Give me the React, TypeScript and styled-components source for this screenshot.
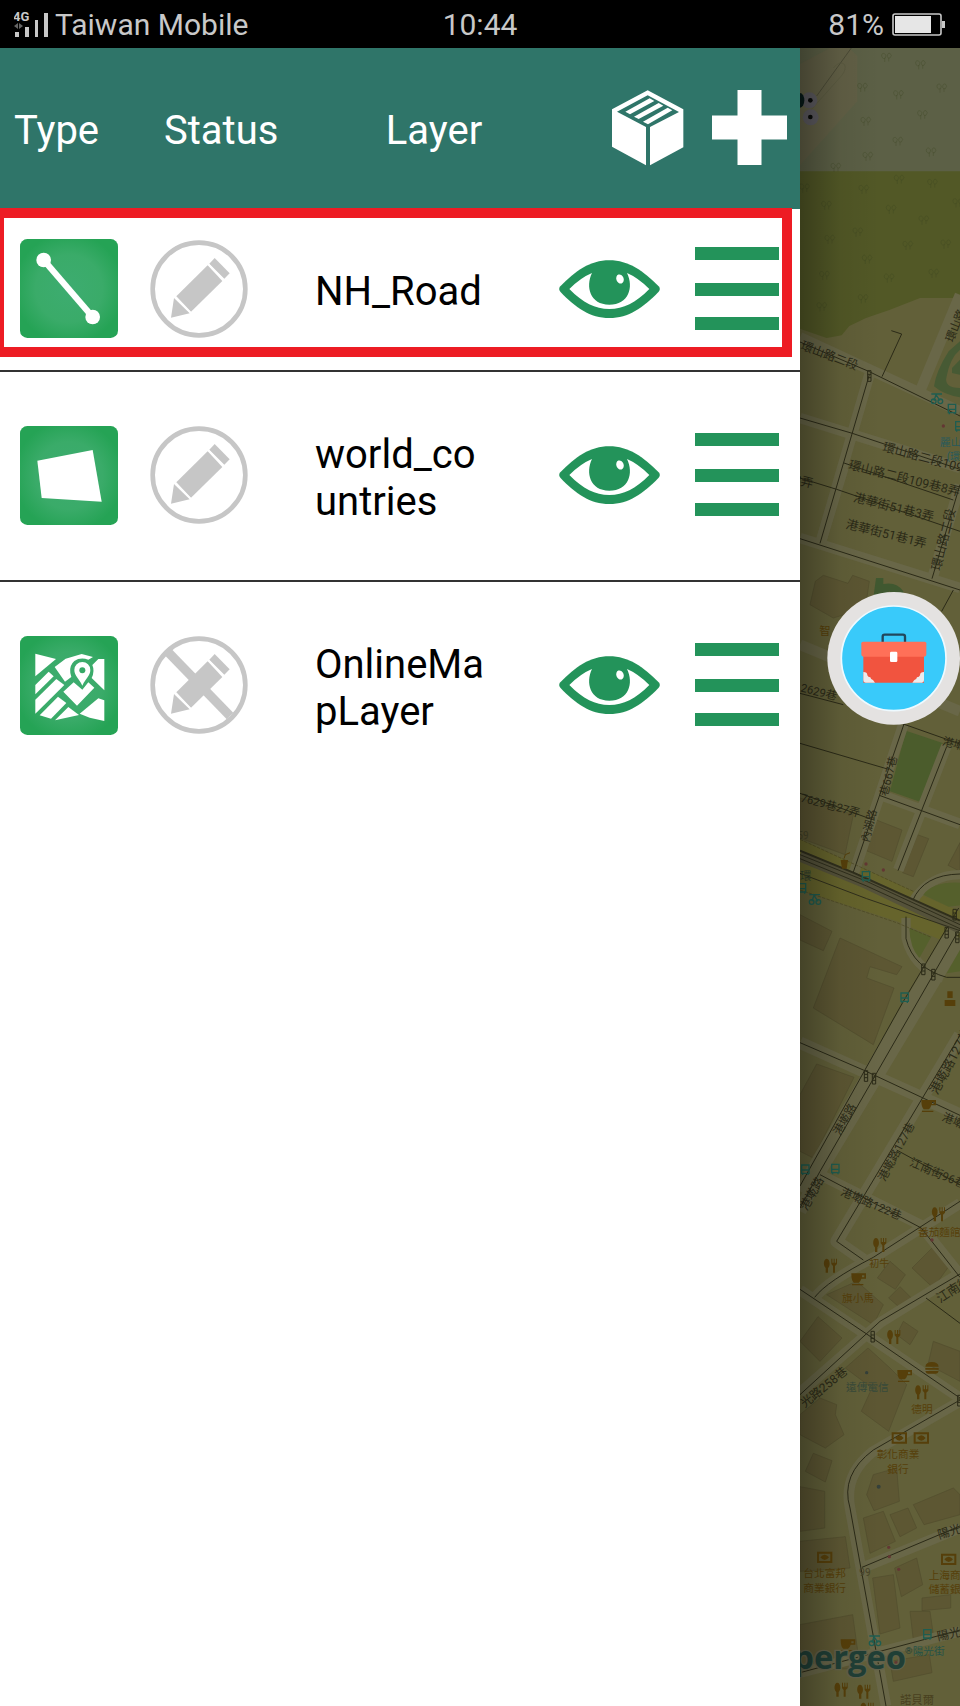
import React from "react";
import styled, { createGlobalStyle } from "styled-components";

const GlobalStyle = createGlobalStyle`
  * { box-sizing: border-box; }
  body { margin: 0; background: #fff; font-family: Roboto, "Noto Sans CJK TC", sans-serif; }
  button { padding: 0; border: 0; background: none; cursor: pointer; }
  svg { display: block; }
`;

const Screen = styled.div`
  min-height: 100vh;
  display: flex;
  flex-direction: column;
`;

const StatusBar = styled.header`
  height: 48px;
  padding: 2px 14px 0;
  display: grid;
  grid-template-columns: 1fr auto 1fr;
  align-items: center;
  background: #000;
  color: #c8c8c8;
  font-size: 30px;
  line-height: 46px;
`;

const StatusGroup = styled.div<{ $end?: boolean }>`
  display: flex;
  align-items: center;
  gap: ${(p) => (p.$end ? 8 : 5)}px;
  justify-content: ${(p) => (p.$end ? "flex-end" : "flex-start")};
`;

const Body = styled.div`
  flex: 1;
  display: grid;
  grid-template-columns: 5fr 1fr;
  position: relative;
`;

const Drawer = styled.main`
  background: #fff;
`;

const LayerTable = styled.table`
  width: 100%;
  table-layout: fixed;
  border-spacing: 0;
  font-size: 40px;
  line-height: 47px;
  color: #000;
`;

const HeadCell = styled.th<{ $align?: string; $pad: string }>`
  height: 161px;
  padding: ${(p) => p.$pad};
  background: #2f7569;
  color: #fff;
  font-weight: 400;
  text-align: ${(p) => p.$align ?? "left"};
`;

const Row = styled.tr`
  position: relative;
  &:not(:last-child) > td { border-bottom: 2px solid #333; }
`;

const Cell = styled.td<{ $left: number }>`
  padding: 0 0 2px ${(p) => p.$left}px;
`;

const NameCell = styled.td`
  padding: 59px 55px 55px 3px;
  word-break: break-all;
`;

const IconButton = styled.button`
  display: inline-block;
  vertical-align: middle;
`;

const Highlight = styled.span`
  position: absolute;
  inset: -1px 8px 15px 0;
  border: 10px solid #ed1c24;
  border-left-width: 4px;
  pointer-events: none;
`;

const MapPane = styled.aside`
  position: relative;
  overflow: hidden;
  background: #60603a;
  & > svg { position: absolute; width: 100%; height: 100%; }
`;

const ToolboxButton = styled.button`
  position: absolute;
  top: 544px;
  right: 0;
  width: 133px;
  height: 133px;
  border-radius: 50%;
`;

const SignalIcon = () => (
  <svg width="36" height="28" viewBox="0 0 36 28" aria-hidden="true">
    <text x="-1" y="10" fontSize="13" fontWeight="700" fill="#c8c8c8" fontFamily="Roboto, sans-serif">4G</text>
    <path d="M0 15l4-3v6zM9 15l-4-3v6z" fill="#666" />
    <path d="M1 21h4v5H1zM11 16h4v10h-4zM21 9h3v17h-3zM30 2h4v24h-4z" fill="#c8c8c8" />
  </svg>
);

const BatteryIcon = () => (
  <svg width="54" height="24" viewBox="0 0 54 24" aria-hidden="true">
    <rect x="1" y="1" width="48" height="21" rx="2" fill="none" stroke="#c8c8c8" strokeWidth="1.6" />
    <path d="M3 3h36v17H3z" fill="#e6e6e6" />
    <path d="M50 8h3v7h-3z" fill="#c8c8c8" />
  </svg>
);

const BoxIcon = () => (
  <svg width="72" height="76" viewBox="397 270 216 228" aria-hidden="true">
    <path d="M504 271L611 328V442L511 496V381L598 336L504 286L412 335L499 381V496L397 440V328Z" fill="#fff" />
    <path d="M437 335L510 295L524 303L451 343ZM463 350L537 309L551 317L477 357ZM490 365L564 323L578 331L505 373Z" fill="#fff" />
  </svg>
);

const PlusIcon = () => (
  <svg width="75" height="75" viewBox="0 0 75 75" aria-hidden="true">
    <path d="M25.500 0h24v25.500H75v24H49.500V75h-24V49.500H0v-24h25.500z" fill="#fff" />
  </svg>
);

type Kind = "line" | "polygon" | "map";

const TypeIcon = ({ kind }: { kind: Kind }) => (
  <svg width="98" height="99" viewBox="59 675 294 297" role="img" aria-label={kind}>
    <defs>
      <radialGradient id={`tile-${kind}`} r="0.620">
        <stop offset="0" stopColor="#3dac70" />
        <stop offset="0.550" stopColor="#3aab69" />
        <stop offset="0.900" stopColor="#25a355" />
      </radialGradient>
    </defs>
    <rect x="59" y="675" width="294" height="297" rx="22" fill={`url(#tile-${kind})`} />
    {kind === "line" && (
      <g fill="#fff" stroke="#fff">
        <path d="M130 738L277 909" strokeWidth="19" />
        <circle cx="130" cy="738" r="22" stroke="none" />
        <circle cx="277" cy="909" r="22" stroke="none" />
      </g>
    )}
    {kind === "polygon" && <path d="M111 779L277 747L304 902L124 891Z" fill="#fff" />}
    {kind === "map" && (
      <g fill="#fff">
        <path d="M105 728L167 744L105 796Z" />
        <path d="M163 768L196 743L244 729L278 738L264 746Q240 738 222 750Q206 764 210 786L213 798L194 812Z" />
        <path d="M276 762L294 744H312V838L274 801Q284 780 276 762Z" />
        <path d="M105 822L145 782L160 796L105 850Z" />
        <path d="M105 866L168 804L192 822L105 908Z" />
        <path d="M118 913L173 857L198 876L152 923Z" />
        <path d="M164 928L204 888L236 912Z" />
        <path d="M189 842L220 814L246 836L264 814L282 830L230 884Z" />
        <path d="M238 908L294 862L312 868V930L268 920Z" />
        <path d="M246 824C236 802 222 794 222 777A24 24 0 0 1 270 777C270 794 256 802 246 824Z" />
        <circle cx="246" cy="778" r="9" fill="#36a966" />
      </g>
    )}
  </svg>
);

const PencilIcon = ({ disabled }: { disabled?: boolean }) => (
  <svg width="98" height="98" viewBox="449 48 294 294" aria-hidden="true">
    <circle cx="596" cy="195" r="139" fill="none" stroke="#c6c6c6" strokeWidth="14" />
    {disabled && <path d="M503 96L689 288" stroke="#c6c6c6" strokeWidth="27" />}
    <path d="M622 124L666 171L572 263L528 217Z" fill="#c6c6c6" />
    <path d="M643 102L688 148L672 164L627 119Z" fill="#c6c6c6" />
    <path d="M521 222L568 268L512 281Z" fill="#c6c6c6" />
    <path d="M624 121L670 168M524 219L571 266" stroke="#fff" strokeWidth="4" />
  </svg>
);

const EyeIcon = () => (
  <svg width="101" height="58" viewBox="177 180 303 174" aria-hidden="true">
    <path d="M181 259C226 213 270 181 328 181S430 213 476 259Q483 267 476 275C430 322 386 354 328 354S226 322 181 275Q174 267 181 259Z" fill="#23935a" />
    <path d="M208 267Q242 233 276 219C256 260 270 314 328 314S402 262 381 219Q414 233 448 267C406 309 371 327 328 327S250 309 208 267Z" fill="#fff" />
    <ellipse cx="360" cy="237" rx="11" ry="14" transform="rotate(-20 360 237)" fill="#fff" />
  </svg>
);

const MenuIcon = () => (
  <svg width="84" height="84" viewBox="0 0 84 84" aria-hidden="true">
    <path d="M0 0h84v13H0zM0 36h84v13H0zM0 70h84v13H0z" fill="#23935a" />
  </svg>
);

const ToolboxIcon = () => (
  <svg width="133" height="133" viewBox="980 36 399 399" aria-hidden="true">
    <circle cx="1180" cy="235" r="199" fill="#e4e2e1" />
    <circle cx="1180" cy="235" r="157" fill="#39cafa" stroke="#eefaff" strokeWidth="5" />
    <path d="M1147 188V170Q1147 164 1153 164H1208Q1214 164 1214 170V188" fill="none" stroke="#22475c" strokeWidth="7" />
    <path d="M1089 224H1271V308H1089Z" fill="#f1543f" />
    <path d="M1083 190Q1083 185 1088 185H1273Q1278 185 1278 190V222Q1278 230 1270 230H1091Q1083 230 1083 222Z" fill="#ff7058" />
    <rect x="1169" y="215" width="22" height="31" rx="4" fill="#fff" />
    <path d="M1089 276Q1101 276 1101 286Q1103 292 1110 292Q1111 299 1118 300L1124 308H1096Q1089 308 1089 301ZM1271 276Q1259 276 1259 286Q1257 292 1250 292Q1249 299 1242 300L1236 308H1264Q1271 308 1271 301Z" fill="#ecebed" />
  </svg>
);

type Label = { x: number; y: number; r?: number; s?: number; c?: string; t: string };

const INK = "#2b2a17";
const BROWN = "#563f0a";
const TEAL = "#1f5d50";

const labels: Label[] = [
  { x: 0, y: 902, r: 21, s: 36, t: "環山路二段" },
  { x: 458, y: 884, r: -68, s: 34, t: "環山路" },
  { x: 246, y: 1208, r: 15, s: 37, t: "環山路二段109巷" },
  { x: 144, y: 1262, r: 14, s: 37, t: "環山路二段109巷8弄" },
  { x: 158, y: 1360, r: 14, s: 37, t: "港華街51巷3弄" },
  { x: 136, y: 1440, r: 14, s: 37, t: "港華街51巷1弄" },
  { x: -20, y: 1306, r: 14, s: 37, t: "8弄" },
  { x: 420, y: 1570, r: -76, s: 38, t: "環山路二段" },
  { x: 420, y: 1195, s: 32, c: "#285a5b", t: "麗山" },
  { x: 440, y: 1236, s: 30, c: "#285a5b", t: "(環" },
  { x: 58, y: 1762, s: 34, c: BROWN, t: "智" },
  { x: 0, y: 1930, r: 14, s: 34, t: "2629巷" },
  { x: 425, y: 2090, r: 15, s: 34, t: "港墘" },
  { x: 262, y: 2246, r: -76, s: 33, t: "巷667巷" },
  { x: 0, y: 2260, r: 15, s: 34, t: "7629巷27弄" },
  { x: 206, y: 2384, r: -76, s: 33, t: "內湖路" },
  { x: -8, y: 2374, s: 30, c: "#454327", t: "59" },
  { x: 0, y: 2496, s: 34, c: "#32422e", t: "環" },
  { x: 412, y: 3142, r: -62, s: 38, t: "港墘路127巷" },
  { x: 120, y: 3264, r: -61, s: 34, t: "港墘路" },
  { x: 424, y: 3216, r: 22, s: 34, t: "港墘" },
  { x: 254, y: 3402, r: -62, s: 34, t: "港墘路127巷" },
  { x: 326, y: 3352, r: 23, s: 35, t: "江南街96巷" },
  { x: 20, y: 3490, r: -61, s: 36, t: "港墘路" },
  { x: 120, y: 3440, r: 23, s: 34, t: "港墘路122巷" },
  { x: 354, y: 3564, s: 32, c: BROWN, t: "番茄麵館" },
  { x: 208, y: 3656, s: 30, c: BROWN, t: "初牛" },
  { x: 126, y: 3762, s: 32, c: BROWN, t: "旗小馬" },
  { x: 420, y: 3766, r: -33, s: 38, t: "江南街" },
  { x: 14, y: 4080, r: -39, s: 36, t: "光路258巷" },
  { x: 138, y: 4030, s: 32, c: "#384a3a", t: "遠傳電信" },
  { x: 334, y: 4096, s: 32, c: BROWN, t: "德明" },
  { x: 230, y: 4230, s: 32, c: BROWN, t: "彰化商業" },
  { x: 262, y: 4274, s: 32, c: BROWN, t: "銀行" },
  { x: 418, y: 4474, r: -18, s: 36, t: "陽光" },
  { x: 10, y: 4588, s: 32, c: BROWN, t: "台北富邦" },
  { x: 10, y: 4632, s: 32, c: BROWN, t: "商業銀行" },
  { x: 178, y: 4584, s: 30, c: "#47432a", t: "99" },
  { x: 386, y: 4592, s: 32, c: BROWN, t: "上海商" },
  { x: 386, y: 4636, s: 32, c: BROWN, t: "儲蓄銀" },
  { x: 414, y: 4778, r: -12, s: 36, t: "陽光" },
  { x: 338, y: 4820, s: 32, c: "#265348", t: "陽光街" },
  { x: 300, y: 4968, s: 34, c: "#49401f", t: "諾貝爾" },
];

const trees = [
  [258, 28], [360, 50], [186, 118], [294, 140], [424, 120], [366, 200], [196, 220], [292, 280], [202, 325], [392, 312], [106, 358],
  [296, 394], [190, 424], [396, 406], [78, 472], [272, 484], [370, 516], [172, 552], [88, 574], [322, 592], [436, 588], [200, 634],
  [72, 682], [266, 690], [400, 676], [188, 752], [64, 776], [12, 420], [472, 464],
];

const meals = [[414, 3498], [238, 3590], [90, 3652], [280, 3866], [364, 4032], [122, 4924], [190, 4930], [200, 4984]];
const cups = [[384, 3172], [174, 3692], [312, 3982], [142, 4790]];
const banks = [[298, 4170], [364, 4170], [74, 4528], [446, 4534]];
const lights = [[208, 984], [464, 2600], [440, 2654], [472, 2668], [370, 2764], [400, 2780], [198, 3084], [222, 3092], [218, 3866], [478, 4058]];
const stops = [[456, 1082], [478, 1134], [198, 2484], [6, 2520], [314, 2848], [16, 3364], [106, 3362], [382, 4758]];
const bikes = [[410, 1050], [44, 2552], [224, 4776]];
const dots = [[430, 1134], [198, 2448], [250, 2466], [396, 3576], [266, 4498], [268, 4526], [296, 4564], [288, 4844]];

const MapView = () => (
  <svg viewBox="0 0 480 4974" preserveAspectRatio="xMinYMin slice" role="img" aria-label="Street map">
    <defs>
      <linearGradient id="edge-shade">
        <stop offset="0" stopColor="#000" stopOpacity="0.300" />
        <stop offset="0.250" stopColor="#000" stopOpacity="0.060" />
        <stop offset="0.500" stopColor="#000" stopOpacity="0" />
      </linearGradient>
    </defs>
    <path d="M0 0H480V4974H0Z" fill="#626039" />
    <path d="M0 0H480V750H360L268 786L198 810L148 834L125 862L80 870L0 842Z" fill="#525826" />
    <path d="M0 0H480V370H0Z" fill="#5c6046" />
    <path d="M0 48L90 0H148L172 24V160L0 352Z" fill="#626046" />
    <path d="M154 0L50 144" fill="none" stroke="#3f402e" strokeWidth="2" />
    <path d="M100 60Q120 36 134 50Q140 64 124 84L20 200" fill="none" stroke="#57573e" strokeWidth="2" />
    <g fill="none" stroke="#3c4420" strokeOpacity="0.300" strokeWidth="3">
      {trees.map(([x, y]) => (
        <path key={`${x}-${y}`} d={`M${x - 12} ${y}q-4-12 6-12q10 4 4 14q-6 4-10-2M${x + 4} ${y - 2}q0-12 8-10q8 6 0 14q-6 2-8-4M${x - 4} ${y + 2}v12M${x + 8} ${y + 2}v10`} />
      ))}
    </g>
    <circle cx="28" cy="157" r="24" fill="#5d5b60" />
    <circle cx="32" cy="208" r="24" fill="#5d5b60" />
    <ellipse cx="0" cy="157" rx="13" ry="22" fill="#071a18" />
    <circle cx="31" cy="157" r="7" fill="#080a08" />
    <circle cx="31" cy="207" r="7" fill="#080a08" />

    {/* parks, rail corridor and buildings */}
    <g fill="#475a34">
      <path d="M480 880L446 910Q408 970 402 1015Q430 1040 480 1048V1020Q430 1020 440 985Q450 930 480 905Z" />
      <path d="M480 935L456 960V975L480 980Z" />
      <path d="M228 1590H250V1608Q290 1600 310 1630V1660H270V1630L220 1650Z" fill="#405830" />
      <path d="M318 2048L430 2086L368 2264L270 2230Z" fill="#4b5c2c" />
    </g>
    <path d="M0 2374L340 2530L480 2590V2700L290 2620L0 2526Z" fill="#66642c" />
    <g fill="#5d5733" stroke="#524d2d" strokeWidth="2">
      <path d="M46 1600L70 1582L144 1606L158 1582L208 1600L196 1680L100 1710L30 1670Z" />
      <path d="M0 2250L160 2300L135 2420L0 2370ZM214 2310L306 2346L276 2440L180 2400ZM352 2360L386 2372L340 2486L308 2474ZM480 2384L444 2452L480 2470Z" />
      <path d="M0 2600L96 2650L70 2708L0 2676ZM120 2670L306 2756L290 2780L210 2756L200 2790L282 2820L220 2990L40 2880Z" />
      <path d="M50 3048L162 3088L40 3330L0 3310V3140Z" />
      <path d="M80 3740L170 3700L250 3770L220 3830ZM270 3640L316 3680L286 3724L232 3690ZM400 3596L450 3650L400 3720L336 3660ZM300 3716L340 3756L310 3788L266 3750Z" />
      <path d="M54 3806L126 3870L60 3940L0 3880ZM204 3900L270 3960L320 4010L266 4150L184 4090L216 4020L136 3960ZM310 3820L354 3850L330 3890L290 3860ZM400 3880L480 3910V4000L384 3950Z" />
      <path d="M60 4050L110 4070L106 4100L132 4160L76 4200L0 4160V4100ZM40 4216L96 4238L76 4302L16 4270ZM0 4316L74 4330V4440L0 4450Z" />
      <path d="M220 4280L290 4260L298 4360L222 4388L200 4340ZM340 4370L460 4320L480 4340V4400L372 4430ZM190 4410L250 4390L286 4480L210 4516ZM270 4400L324 4380L350 4440L300 4466Z" />
      <path d="M0 4480L136 4466L150 4560L0 4570ZM218 4590L280 4580L300 4740L240 4758ZM284 4560L350 4530L368 4610L304 4646ZM366 4650L452 4640V4680L366 4688ZM330 4690L390 4690L400 4760L340 4776ZM0 4730L158 4700L180 4860L0 4870ZM270 4840L388 4820L396 4874L280 4900Z" />
    </g>

    {/* road beds */}
    <g fill="none" stroke="#696748" strokeWidth="32" strokeLinejoin="round">
      <path d="M0 868L480 1090M208 980L60 1490M0 1110L480 1260M480 740L360 1030M0 1470L480 1620" />
      <path d="M60 1490L130 1260M400 1580L480 1310M0 1790L480 1990M310 2030L160 2480M240 2240L480 2328M440 2092L295 2466" />
      <path d="M480 2480Q390 2480 338 2560M318 2610V2670Q340 2760 430 2790" strokeWidth="28" />
      <path d="M470 2630L0 3430M480 2670L60 3370L0 3490M0 2984L480 3200M480 2960L110 3580L190 3636" strokeWidth="38" />
      <path d="M60 3380L360 3530L480 3680M0 3726L480 4050M480 3466L230 3624Q80 3700 44 3750M480 3676L240 3824L0 4034" />
      <path d="M480 4060L220 4210Q130 4280 150 4380L258 4974M186 4560L480 4440M0 4874L480 4750" />
    </g>
    <path d="M370 2540Q400 2500 480 2504V2572L446 2576ZM328 2640L394 2666L358 2730Q330 2700 328 2640ZM480 2706L440 2776L480 2770Z" fill="#55602c" />

    {/* road centre lines */}
    <g fill="none" stroke={INK} strokeWidth="3">
      <path d="M0 882L206 970L480 1104M208 980L60 1486M0 1110L157 1156L480 1264M0 1290L110 1324L480 1450M132 1245L460 1356M246 986L305 858L274 848M0 1472L480 1626M480 1310L396 1592" />
      <path d="M460 1626L425 1690M0 1936L130 1970M312 2028L158 2478M310 2028L480 2088M0 2086L266 2164M440 2096L294 2468M238 2242L480 2330M0 2236L215 2314" />
      <path d="M480 2478Q370 2480 338 2558M318 2606V2672Q340 2760 440 2788H480" />
      <path d="M476 2580L310 2860L0 3414M480 2640L356 2856L60 3370L0 3480M0 2984L190 3066L480 3202M480 2962L110 3580L190 3636M290 3306L480 3410" />
      <path d="M60 3380L364 3540L480 3688M480 3460L220 3628Q80 3700 44 3748M480 3678L240 3820L0 4040M0 3724L200 3858L480 4050M378 3750L480 3826" />
      <path d="M480 4056L220 4206Q120 4280 150 4380L258 4974M186 4558L480 4434M0 4874L240 4810L480 4746" />
    </g>
    <path d="M0 2424L200 2506L480 2640" fill="none" stroke="#55523a" strokeWidth="34" />
    <g fill="none" stroke="#302f1c">
      <path d="M0 2408L160 2474L480 2618" strokeWidth="6" />
      <path d="M0 2420L200 2500L480 2630M0 2432L200 2514L480 2642M0 2476L200 2552L480 2648" strokeWidth="3" />
      <path d="M0 2374L340 2530M0 2526L290 2624L394 2668" strokeWidth="2" stroke="#4a4620" strokeDasharray="10 4" />
    </g>

    {labels.map((l, i) => (
      <text key={i} fill={l.c ?? INK} fontSize={l.s ?? 35} transform={`translate(${l.x} ${l.y}) rotate(${l.r ?? 0})`}>
        {l.t}
      </text>
    ))}

    <g fill={BROWN}>
      {meals.map(([x, y]) => (
        <path key={`${x}-${y}`} d={`M${x - 10} ${y - 20}c10 0 12 22 4 28v14h-7v-14c-8-6-7-28 3-28zM${x + 4} ${y - 20}h3v12h4v-12h3v12h4v-12h3v16l-6 6v20h-6v-20l-5-6z`} />
      ))}
      {cups.map(([x, y]) => (
        <path key={`${x}-${y}`} d={`M${x - 20} ${y - 16}h44v16h-14q-3 10-8 12h-14q-8-4-8-28zM${x + 12} ${y - 10}v6h7v-6zM${x - 18} ${y + 16}h34v4h-34z`} fillRule="evenodd" />
      ))}
      {banks.map(([x, y]) => (
        <path key={`${x}-${y}`} d={`M${x - 23} ${y - 17}h46v34h-46zM${x - 17} ${y - 11}v22h34v-22zM${x - 13} ${y}q13-16 26 0q-13 16-26 0z`} fillRule="evenodd" />
      ))}
      <path d="M376 3956q2-14 20-14t20 14zM376 3960h40v5h-40zM376 3969h40q-2 8-8 8h-24q-6 0-8-8z" />
      <path d="M122 2436h22l-4 26h-14z" />
      <path d="M132 2432l4-12 14-6" fill="none" stroke={BROWN} strokeWidth="3" />
      <path d="M434 2856h32v18h-32zM442 2830h16v20h-16z" />
    </g>
    <g fill="none" stroke={INK} strokeWidth="3">
      {lights.map(([x, y]) => (
        <path key={`${x}-${y}`} d={`M${x - 5} ${y - 16}h10v32h-10zM${x - 5} ${y - 5}h10M${x - 5} ${y + 5}h10`} />
      ))}
    </g>
    <g fill="none" stroke={TEAL} strokeWidth="4">
      {stops.map(([x, y]) => (
        <path key={`${x}-${y}`} d={`M${x - 11} ${y - 13}h22v25h-22zM${x - 11} ${y + 2}h22M${x - 8} ${y + 12}v5M${x + 8} ${y + 12}v5`} />
      ))}
      {bikes.map(([x, y]) => (
        <path key={`${x}-${y}`} d={`M${x - 16} ${y + 10}a7 7 0 1 0 14 0a7 7 0 1 0-14 0M${x + 4} ${y + 10}a7 7 0 1 0 14 0a7 7 0 1 0-14 0M${x - 8} ${y + 8}l6-18 12 18M${x - 16} ${y - 12}h32`} />
      ))}
    </g>
    <g fill="#633733">
      {dots.map(([x, y]) => <circle key={`${x}-${y}`} cx={x} cy={y} r="5" />)}
    </g>
    <g fill="#35403a">
      <circle cx="200" cy="3974" r="5" />
      <circle cx="236" cy="4316" r="6" />
    </g>
    <text x="318" y="4864" textAnchor="end" fontFamily="Open Sans, sans-serif" fontWeight="700" fontSize="98" fill="#203f36" stroke="#62614a" strokeWidth="8" paintOrder="stroke">pergeo</text>
    <text x="315" y="4818" fontSize="28" fill="#203f36">®</text>
    <path d="M0 0H480V4974H0Z" fill="url(#edge-shade)" />
  </svg>
);

const layers: { kind: Kind; name: string; locked?: boolean; marked?: boolean }[] = [
  { kind: "line", name: "NH_Road", marked: true },
  { kind: "polygon", name: "world_countries" },
  { kind: "map", name: "OnlineMapLayer", locked: true },
];

export default function App() {
  return (
    <Screen>
      <GlobalStyle />
      <StatusBar>
        <StatusGroup><SignalIcon />Taiwan Mobile</StatusGroup>
        <time>10:44</time>
        <StatusGroup $end>81%<BatteryIcon /></StatusGroup>
      </StatusBar>
      <Body>
        <Drawer>
          <LayerTable>
            <colgroup>
              <col width="17%" />
              <col width="22%" />
              <col width="29%" />
              <col width="18%" />
              <col width="14%" />
            </colgroup>
            <thead>
              <tr>
                <HeadCell scope="col" $pad="4px 0 0 14px">Type</HeadCell>
                <HeadCell scope="col" $pad="4px 0 0 28px">Status</HeadCell>
                <HeadCell scope="col" $pad="4px 0 0 12px" $align="center">Layer</HeadCell>
                <HeadCell scope="col" $pad="0 4px 2px 0" $align="right">
                  <IconButton aria-label="Layer package"><BoxIcon /></IconButton>
                </HeadCell>
                <HeadCell scope="col" $pad="0 13px 2px 0" $align="right">
                  <IconButton aria-label="Add layer"><PlusIcon /></IconButton>
                </HeadCell>
              </tr>
            </thead>
            <tbody>
              {layers.map((layer) => (
                <Row key={layer.name}>
                  <Cell $left={20}><TypeIcon kind={layer.kind} /></Cell>
                  <Cell $left={14}>
                    <IconButton aria-label={`Edit ${layer.name}`} disabled={layer.locked}><PencilIcon disabled={layer.locked} /></IconButton>
                  </Cell>
                  <NameCell>{layer.name}</NameCell>
                  <Cell $left={15}>
                    <IconButton aria-label={`Show ${layer.name}`}><EyeIcon /></IconButton>
                  </Cell>
                  <Cell $left={7}>
                    <IconButton aria-label={`Options for ${layer.name}`}><MenuIcon /></IconButton>
                    {layer.marked && <Highlight />}
                  </Cell>
                </Row>
              ))}
            </tbody>
          </LayerTable>
        </Drawer>
        <MapPane><MapView /></MapPane>
        <ToolboxButton aria-label="Toolbox"><ToolboxIcon /></ToolboxButton>
      </Body>
    </Screen>
  );
}
